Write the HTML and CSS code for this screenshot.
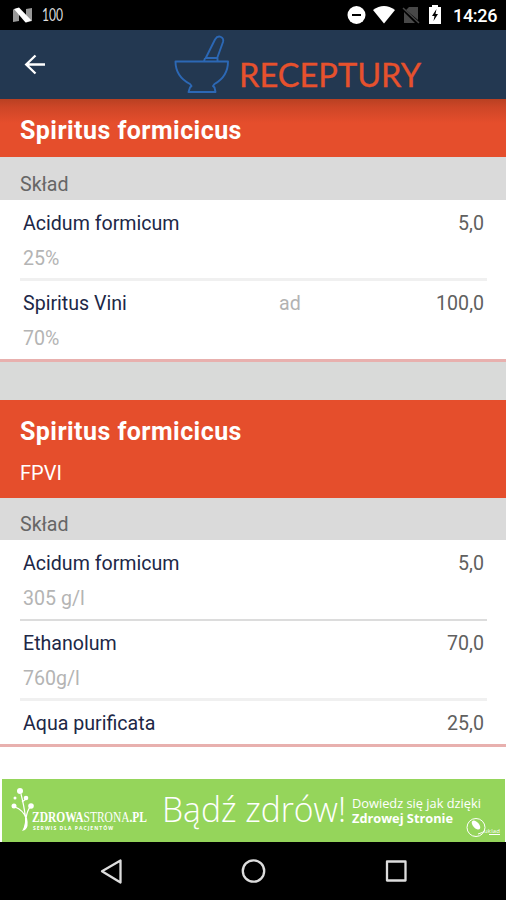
FILE: index.html
```html
<!DOCTYPE html>
<html lang="pl">
<head>
<meta charset="utf-8">
<title>Receptury</title>
<link rel="stylesheet" href="styles.css">
</head>
<body>
<div class="status">
  <svg class="android" width="20" height="16" viewBox="0 0 20 16"><path fill="#999" d="M0 2.500 6 1v13l-6 1zM13 2l6-1v13l-6 1.500z"/><path fill="#fff" d="M1 2 6 .5l12.500 13-6 2z"/></svg>
  <svg class="count" width="22" height="20" viewBox="0 0 22 20"><text x="0" y="15.500" textLength="21" lengthAdjust="spacingAndGlyphs">100</text></svg>
  <svg class="tray" width="98" height="20" viewBox="0 0 98 20">
    <circle cx="9.500" cy="10" r="9" fill="#fff"/><path d="M5 10h9" stroke="#000" stroke-width="2"/>
    <path fill="#fff" d="M26 5q11-8 22 0L37 18.500z"/>
    <path fill="#484848" d="M59 5l3-3h9v13zM57 7l11 11H57z"/><path d="M56 3l16 15" stroke="#484848" stroke-width="1.500"/>
    <path fill="#fff" d="M82 2h3V0h6v2h3v17H82z"/><path fill="#000" d="M89.500 4l-4.500 7h2.500l-1 5 4.500-7h-2.500z"/>
  </svg>
  <span class="clock">14:26</span>
</div>
<header class="appbar">
  <svg class="back" width="22" height="22" viewBox="0 0 22 22"><path d="M11.500 1.500 2.200 10.500l9.300 9M2.500 10.500h18.500" fill="none" stroke="#fff" stroke-width="2.300"/></svg>
  <svg class="logo" width="250" height="62" viewBox="0 0 250 62">
    <g fill="none" stroke="#2c68b5" stroke-width="1.900" stroke-linejoin="round"><path d="M1.500 27.500H54q0 15-13.500 22.500l-1.500 2 1.500 1.500 1 4.500H14.500l1.500-4.500 1.500-1.500-1.500-2Q1.500 42.500 1.500 27.500z"/><path d="M32 23.500 41 5.500q2.500-4 6-2.500 3 1.500 2 5L43 24.500M31 24h12.500v3.500M31 24l-1 3.500"/></g>
    <text x="65" y="53" textLength="182" lengthAdjust="spacingAndGlyphs">RECEPTURY</text>
  </svg>
</header>
<main>
  <section class="recipe">
    <div class="heading raised"><h2>Spiritus formicicus</h2></div>
    <h3>Skład</h3>
    <ul>
      <li><div class="row"><span>Acidum formicum</span><b>5,0</b></div><p>25%</p></li>
      <li><div class="row"><span>Spiritus Vini</span><i>ad</i><b>100,0</b></div><p>70%</p></li>
    </ul>
  </section>
  <div class="gap"></div>
  <section class="recipe">
    <div class="heading"><h2>Spiritus formicicus</h2><div class="source">FPVI</div></div>
    <h3>Skład</h3>
    <ul>
      <li class="crisp"><div class="row"><span>Acidum formicum</span><b>5,0</b></div><p>305 g/l</p></li>
      <li><div class="row"><span>Ethanolum</span><b>70,0</b></div><p>760g/l</p></li>
      <li><div class="row"><span>Aqua purificata</span><b>25,0</b></div></li>
    </ul>
  </section>
</main>
<aside class="banner">
  <svg width="503" height="63" viewBox="0 0 503 63" fill="#fff">
    <g fill="none" stroke="#fff" stroke-width="1.200"><path d="M22 50q3-9 1-15-1-8-4-20M24 40q1-9 5-13M24 39q-3-8-11-11M20 23l4-3"/></g>
    <path d="M20 52q4-5 3-13h2q2 9-2 12z"/>
    <circle cx="18" cy="12" r="3"/><circle cx="24" cy="19" r="2.300"/><circle cx="12" cy="27" r="2.500"/><circle cx="29" cy="27" r="2.800"/><circle cx="13" cy="19" r="1.500"/>
    <text class="brand" x="30" y="43" textLength="115" lengthAdjust="spacingAndGlyphs"><tspan class="strong">ZDROWA</tspan>STRONA<tspan class="strong">.PL</tspan></text>
    <text class="tagline" x="31" y="51" textLength="80">SERWIS DLA PACJENTÓW</text>
    <text class="slogan" x="160" y="42.500" textLength="184" lengthAdjust="spacingAndGlyphs">Bądź zdrów!</text>
    <text class="note" x="350" y="28.500" textLength="129" lengthAdjust="spacingAndGlyphs">Dowiedz się jak dzięki</text>
    <text class="note strong" x="350" y="43.500" textLength="101" lengthAdjust="spacingAndGlyphs">Zdrowej Stronie</text>
    <circle cx="474" cy="48.500" r="9" fill="none" stroke="#fff"/><ellipse cx="474" cy="46" rx="3" ry="5.500" transform="rotate(-42 474 46)"/><path d="M476 55q5-1 7-4M487 55.500h11" fill="none" stroke="#fff"/>
    <text class="mini" x="482" y="54" textLength="16">uklad</text>
  </svg>
</aside>
<nav>
  <svg width="506" height="58" viewBox="0 0 506 58" fill="none" stroke="#ddd" stroke-width="2.300" stroke-linejoin="round"><path d="M120.500 18.500v22L102 29.200z"/><circle cx="253.500" cy="29" r="10.700"/><path d="M387 19.500h18.500v19H387z"/></svg>
</nav>
</body>
</html>
```
FILE: styles.css
```css
* { box-sizing: border-box; }
body { margin: 0; width: 506px; height: 900px; overflow: hidden; background: #fff; font-family: Roboto, sans-serif; display: flex; flex-direction: column; }
svg { display: block; flex: none; }
h2, h3, p, ul { margin: 0; padding: 0; }
.status { height: 30px; flex: none; background: #000; color: #fff; display: flex; align-items: center; padding: 0 9px 0 13px; }
.count { margin-left: 9px; }
.count text { font: 17px Lato, sans-serif; fill: #ddd; }
.tray { margin-left: auto; }
.clock { font-size: 18px; font-weight: 500; width: 44px; margin-left: 8px; white-space: nowrap; letter-spacing: -.3px; }
.appbar { height: 69px; flex: none; background: #233851; display: flex; align-items: center; padding-left: 24px; }
.logo { margin-left: 128px; }
.logo text { font: 32px Lato, sans-serif; fill: #e6512d; stroke: #e6512d; stroke-width: .3px; }
.heading { height: 58px; background: #e54e2c; color: #fff; padding: 17px 20px 0; }
.gap + .recipe .heading { height: 98px; }
.raised { background: linear-gradient(#b94022, #cd4627 8px, #e54e2c 24px); }
h2 { font-size: 25px; line-height: 30px; font-weight: 700; letter-spacing: .45px; }
.source { font-size: 20px; line-height: 24px; margin-top: 14px; }
h3 { height: 43px; background: #dadada; color: #666; font-size: 19.600px; font-weight: 400; line-height: 24px; padding: 16px 20px 0; }
.gap + .recipe h3 { height: 42px; padding-top: 15px; }
.gap { height: 38px; background: #d9dad9; }
ul { list-style: none; padding: 0 19px 0 20px; border-bottom: 3px solid #e8b0ae; }
li { height: 80px; padding: 11px 3px 0; border-bottom: 3px solid #f0f0f0; font-size: 19.600px; line-height: 24px; }
li:first-child { height: 81px; padding-top: 12px; }
li.crisp { border-bottom: 2px solid #dcdcdc; }
li:last-child { border-bottom: 0; height: 78px; }
.gap + .recipe li:last-child { height: 43px; }
.row { display: grid; grid-template-columns: 256px 80px 1fr; color: #202746; }
.row i { font-style: normal; color: #b3b3b3; }
.row b { grid-column: 3; text-align: right; font-weight: 400; color: #606060; }
p { color: #b4b4b4; margin-top: 11px; }
.banner { margin: 32px 1px 0 2px; height: 63px; flex: none; background: #95d55b; }
.brand { font: 15px/1 "Liberation Serif", serif; }
.strong { font-weight: 700; }
.tagline { font: 700 5px "Open Sans", sans-serif; }
.slogan { font: 300 34px "Open Sans", sans-serif; }
.note { font: 13px "Open Sans", sans-serif; }
.note.strong { font-weight: 700; }
.mini { font: 6px "Open Sans", sans-serif; }
nav { height: 58px; flex: none; background: #000; }
```
